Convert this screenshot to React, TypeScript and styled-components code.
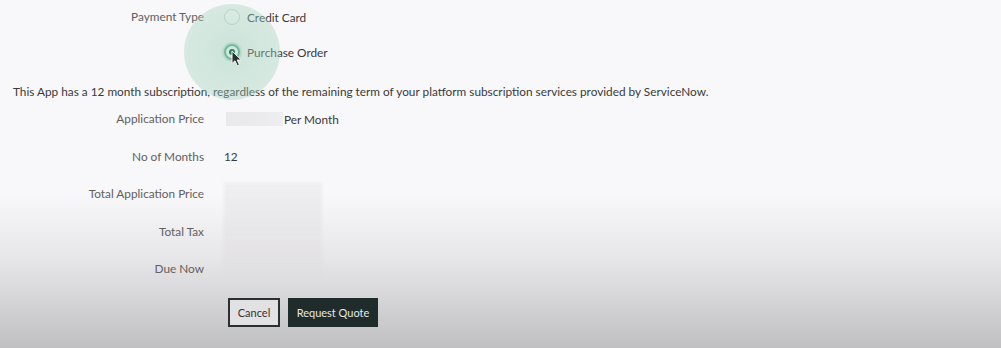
import React from 'react';
import styled, { createGlobalStyle } from 'styled-components';

const GlobalStyle = createGlobalStyle`
  html, body {
    margin: 0;
    padding: 0;
    height: 100%;
  }
  body {
    font-family: Lato, "Open Sans", sans-serif;
    background: linear-gradient(to bottom, #f8f7f9 0px, #f8f7f9 195px, #e6e5e7 260px, #c0bfc1 348px);
    background-attachment: fixed;
    min-height: 348px;
    overflow: hidden;
  }
`;

type Option = { label: string; checked: boolean };

const paymentOptions: Option[] = [
  { label: 'Credit Card', checked: false },
  { label: 'Purchase Order', checked: true },
];

function Cursor() {
  return (
    <svg width="12" height="17" viewBox="0 0 12 17">
      <path
        d="M1 1 L1 13.5 L4 10.8 L6.3 15.8 L8.4 14.8 L6.2 10 L10.3 10 Z"
        fill="#2b2f2e"
        stroke="#f4f4f4"
        strokeWidth="1"
        strokeLinejoin="round"
      />
    </svg>
  );
}

function App() {
  return (
    <>
      <GlobalStyle />
      <Page>
        <PaymentGrid>
          <Label>Payment Type</Label>
          <Options>
            {paymentOptions.map((o) => (
              <OptionRow key={o.label}>
                <Radio $checked={o.checked}>
                  {o.checked && <RadioDot />}
                  {o.checked && (
                    <>
                      <ClickHalo />
                      <CursorSpot>
                        <Cursor />
                      </CursorSpot>
                    </>
                  )}
                </Radio>
                <Value>{o.label}</Value>
              </OptionRow>
            ))}
          </Options>
        </PaymentGrid>

        <Notice>
          This App has a 12 month subscription, regardless of the remaining term of your platform
          subscription services provided by ServiceNow.
        </Notice>

        <PriceGrid>
          <Label>Application Price</Label>
          <Value>
            <SmallBlur />
            Per Month
          </Value>
          <Label>No of Months</Label>
          <Value>12</Value>
          <Label>Total Application Price</Label>
          <TotalsBlur />
          <Label>Total Tax</Label>
          <Label>Due Now</Label>
        </PriceGrid>

        <Actions>
          <CancelButton type="button">Cancel</CancelButton>
          <QuoteButton type="button">Request Quote</QuoteButton>
        </Actions>
      </Page>
    </>
  );
}

const Page = styled.div`
  display: flex;
  flex-direction: column;
  padding-top: 7px;
  font-size: 11.8px;
  position: relative;
`;

const PaymentGrid = styled.div`
  display: grid;
  grid-template-columns: 204px auto;
  column-gap: 20px;
  align-items: start;
`;

const Options = styled.div`
  display: flex;
  flex-direction: column;
  gap: 15px;
`;

const OptionRow = styled.div`
  display: flex;
  align-items: center;
  gap: 7px;
  height: 20px;
`;

const Label = styled.div`
  height: 20px;
  line-height: 20px;
  text-align: right;
  color: #616161;
  white-space: nowrap;
`;

const Value = styled.div`
  display: flex;
  align-items: center;
  height: 20px;
  color: #3a3a3a;
  white-space: nowrap;
`;

const Radio = styled.span<{ $checked: boolean }>`
  position: relative;
  box-sizing: border-box;
  width: 16px;
  height: 16px;
  border-radius: 50%;
  display: flex;
  align-items: center;
  justify-content: center;
  background: ${(p) => (p.$checked ? '#ffffff' : '#fbfbfb')};
  border: ${(p) => (p.$checked ? '2px solid #5ba688' : '1px solid #d3d3d3')};
  box-shadow: ${(p) => (p.$checked ? '0 0 0 2px rgba(91, 166, 136, 0.25)' : 'none')};
`;

const RadioDot = styled.span`
  width: 6px;
  height: 6px;
  border-radius: 50%;
  background: #2f7c61;
  z-index: 2;
`;

const ClickHalo = styled.span`
  position: absolute;
  left: 50%;
  top: 50%;
  width: 96px;
  height: 96px;
  margin: -48px 0 0 -48px;
  border-radius: 50%;
  background: radial-gradient(circle, rgba(150, 205, 178, 0.45) 0%, rgba(160, 210, 185, 0.38) 70%, rgba(165, 212, 188, 0.34) 100%);
  pointer-events: none;
  z-index: 1;
`;

const CursorSpot = styled.span`
  position: absolute;
  left: 5px;
  top: 4px;
  z-index: 3;
  line-height: 0;
`;

const Notice = styled.p`
  margin: 20px 0 7px 13px;
  height: 20px;
  line-height: 20px;
  color: #3a3a3a;
  white-space: nowrap;
  position: relative;
  z-index: 0;
`;

const PriceGrid = styled.div`
  display: grid;
  grid-template-columns: 204px auto;
  grid-auto-rows: 20px;
  column-gap: 20px;
  row-gap: 17.5px;
`;

const SmallBlur = styled.span`
  display: inline-block;
  width: 57px;
  height: 14px;
  margin-left: 2px;
  margin-right: 1px;
  background: linear-gradient(to right, #e9e8ea, #ebeaec 60%, #eeedef);
  filter: blur(0.6px);
`;

const TotalsBlur = styled.div`
  grid-column: 2;
  grid-row: 3 / span 3;
  width: 98px;
  height: 92px;
  margin-top: -1px;
  background: linear-gradient(to bottom, rgba(236, 235, 238, 0.8), rgba(222, 221, 224, 0.75));
  filter: blur(1.5px);
`;

const Actions = styled.div`
  display: flex;
  gap: 8px;
  margin: 19px 0 0 228px;
`;

const BaseButton = styled.button`
  box-sizing: border-box;
  height: 29px;
  font-family: inherit;
  font-size: 11px;
  padding: 0;
  white-space: nowrap;
  cursor: pointer;
`;

const CancelButton = styled(BaseButton)`
  width: 52px;
  border: 2px solid #2a302f;
  background: #e2e1e3;
  color: #333333;
`;

const QuoteButton = styled(BaseButton)`
  width: 90px;
  border: none;
  background: #1f2c2b;
  color: #e6e8e7;
`;

export default App;
